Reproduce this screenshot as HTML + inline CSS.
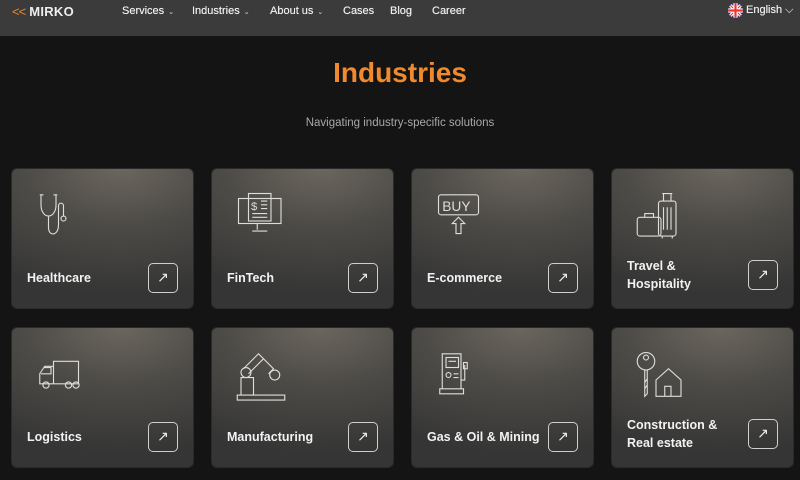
<!DOCTYPE html>
<html><head><meta charset="utf-8"><style>
*{margin:0;padding:0;box-sizing:border-box}
body{width:800px;height:480px;overflow:hidden;background:#141414;font-family:"Liberation Sans",sans-serif;position:relative}
.hdr{position:absolute;left:0;top:0;width:800px;height:36px;background:#3b3b3b}
.logo{position:absolute;left:12px;top:4px;color:#eee;font-size:13px;font-weight:bold;letter-spacing:0.3px}
.logo span{color:#e8862c;letter-spacing:-1px;margin-right:4px;font-weight:normal}
.nav{position:absolute;top:5px;font-size:11px;color:#eee;text-shadow:0 0 0.4px #eee}
.nav i{font-style:normal;font-size:7px;color:#aaa;margin-left:4px}
h1{position:absolute;left:0;width:800px;top:57px;text-align:center;color:#f08a2c;font-size:28px;font-weight:bold}
.sub{position:absolute;left:0;width:800px;top:117px;text-align:center;color:#a8a8a8;font-size:11.5px}
.card{position:absolute;width:181px;height:139px;border-radius:5px;background:radial-gradient(ellipse 120% 90% at 60% 0%,#6b665e 0%,#4d4b47 45%,#353535 100%);box-shadow:0 0 0 1px #2a2a2a}
.card .t{position:absolute;left:15px;color:#f2f2f2;font-size:12.5px;font-weight:bold;line-height:18px}
.card .b{position:absolute;left:136px;width:30px;height:30px;border:1px solid #cfcfcf;border-radius:5px;color:#eee;text-align:center;line-height:27px;font-size:14px}
.card svg{position:absolute;left:24px;top:22px}
</style></head><body>
<div class="hdr">
<div class="logo"><span>&lt;&lt;</span>MIRKO</div>
<div class="nav" style="left:122px">Services<i>⌄</i></div>
<div class="nav" style="left:192px">Industries<i>⌄</i></div>
<div class="nav" style="left:270px">About us<i>⌄</i></div>
<div class="nav" style="left:343px">Cases</div>
<div class="nav" style="left:390px">Blog</div>
<div class="nav" style="left:432px">Career</div>
<svg style="position:absolute;left:728px;top:3px" width="15" height="15" viewBox="0 0 14 14"><defs><clipPath id="c"><circle cx="7" cy="7" r="7"/></clipPath></defs><g clip-path="url(#c)"><rect width="14" height="14" fill="#2b3a8c"/><path d="M0 0L14 14M14 0L0 14" stroke="#fff" stroke-width="3"/><path d="M0 0L14 14M14 0L0 14" stroke="#e33" stroke-width="1"/><path d="M7 0v14M0 7h14" stroke="#fff" stroke-width="4"/><path d="M7 0v14M0 7h14" stroke="#e33" stroke-width="2"/></g></svg>
<div class="nav" style="left:746px;top:4px">English <span style="color:#ccc">⌵</span></div>
</div>
<h1>Industries</h1>
<div class="sub">Navigating industry-specific solutions</div>

<div class="card" style="left:12px;top:169px">
<svg width="55" height="55" viewBox="0 0 44 44" fill="none" stroke="#ddd" stroke-width="0.9"><path d="M4 3v8c0 6 3 9 6 9s6-3 6-9V3M3 3h3M14 3h3M10 20v9c0 5 3 6 5 5s3-3 3-7V12c0-3 4-3 4 0v8"/><circle cx="22" cy="22" r="2"/></svg>
<div class="t" style="top:100px">Healthcare</div><div class="b" style="top:94px">↗</div></div>

<div class="card" style="left:212px;top:169px">
<svg width="55" height="55" viewBox="0 0 44 44" fill="none" stroke="#ddd" stroke-width="0.9"><rect x="2" y="6" width="34" height="20"/><rect x="10" y="2" width="18" height="22"/><path d="M20 8h5M20 11h5M20 14h5M13 18h12M13 21h12M17 26v5M13 32h12"/><text x="12" y="15" font-size="9" fill="#ddd" stroke="none">$</text></svg>
<div class="t" style="top:100px">FinTech</div><div class="b" style="top:94px">↗</div></div>

<div class="card" style="left:412px;top:169px">
<svg width="55" height="55" viewBox="0 0 44 44" fill="none" stroke="#ddd" stroke-width="0.9"><rect x="2" y="3" width="32" height="16" rx="2"/><text x="5" y="16" font-size="11" fill="#ddd" stroke="none" font-family="Liberation Sans">BUY</text><path d="M18 21l-5 5h3v8h4v-8h3z"/></svg>
<div class="t" style="top:100px">E-commerce</div><div class="b" style="top:94px">↗</div></div>

<div class="card" style="left:612px;top:169px">
<svg width="55" height="55" viewBox="0 0 44 44" fill="none" stroke="#ddd" stroke-width="0.9"><rect x="18" y="8" width="14" height="28" rx="2"/><path d="M22 8V2h6v6M21 2h8M22 13v18M25 13v18M28 13v18M21 36v2M29 36v2"/><rect x="1" y="21" width="19" height="15" rx="2"/><path d="M7 21v-3h7v3"/></svg>
<div class="t" style="top:88px">Travel &amp;<br>Hospitality</div><div class="b" style="top:91px">↗</div></div>

<div class="card" style="left:12px;top:328px">
<svg width="55" height="55" viewBox="0 0 44 44" fill="none" stroke="#ddd" stroke-width="0.9"><path d="M14 9h20v18H14zM14 13H7l-4 6v8h11"/><path d="M6 14h6v5H4"/><circle cx="8" cy="28" r="2.5"/><circle cx="26" cy="28" r="2.5"/><circle cx="32" cy="28" r="2.5"/></svg>
<div class="t" style="top:100px">Logistics</div><div class="b" style="top:94px">↗</div></div>

<div class="card" style="left:212px;top:328px">
<svg width="55" height="55" viewBox="0 0 44 44" fill="none" stroke="#ddd" stroke-width="0.9"><path d="M1 36h38v4H1zM4 36V22h10v14"/><circle cx="8" cy="18" r="4"/><path d="M6 15l12-12 4 4-12 12M20 5l10 10-4 4"/><circle cx="31" cy="20" r="4"/></svg>
<div class="t" style="top:100px">Manufacturing</div><div class="b" style="top:94px">↗</div></div>

<div class="card" style="left:412px;top:328px">
<svg width="55" height="55" viewBox="0 0 44 44" fill="none" stroke="#ddd" stroke-width="0.9"><path d="M5 3h15v28H5zM3 31h19v4H3z"/><rect x="8" y="6" width="10" height="8"/><path d="M10 9h6M14 19h4M14 22h4M20 24h3v-8M23 16v-4"/><circle cx="10" cy="20" r="2"/><rect x="22" y="10" width="3" height="5"/></svg>
<div class="t" style="top:100px">Gas &amp; Oil &amp; Mining</div><div class="b" style="top:94px">↗</div></div>

<div class="card" style="left:612px;top:328px">
<svg width="55" height="55" viewBox="0 0 44 44" fill="none" stroke="#ddd" stroke-width="0.9"><circle cx="8" cy="9" r="7"/><circle cx="8" cy="6" r="2"/><path d="M7 16v21l2-2v-19M9 23l-2 3M9 28l-2 3"/><path d="M16 24l10-9 10 9v13H16zM23 37v-8h5v8"/></svg>
<div class="t" style="top:88px">Construction &amp;<br>Real estate</div><div class="b" style="top:91px">↗</div></div>
</body></html>
